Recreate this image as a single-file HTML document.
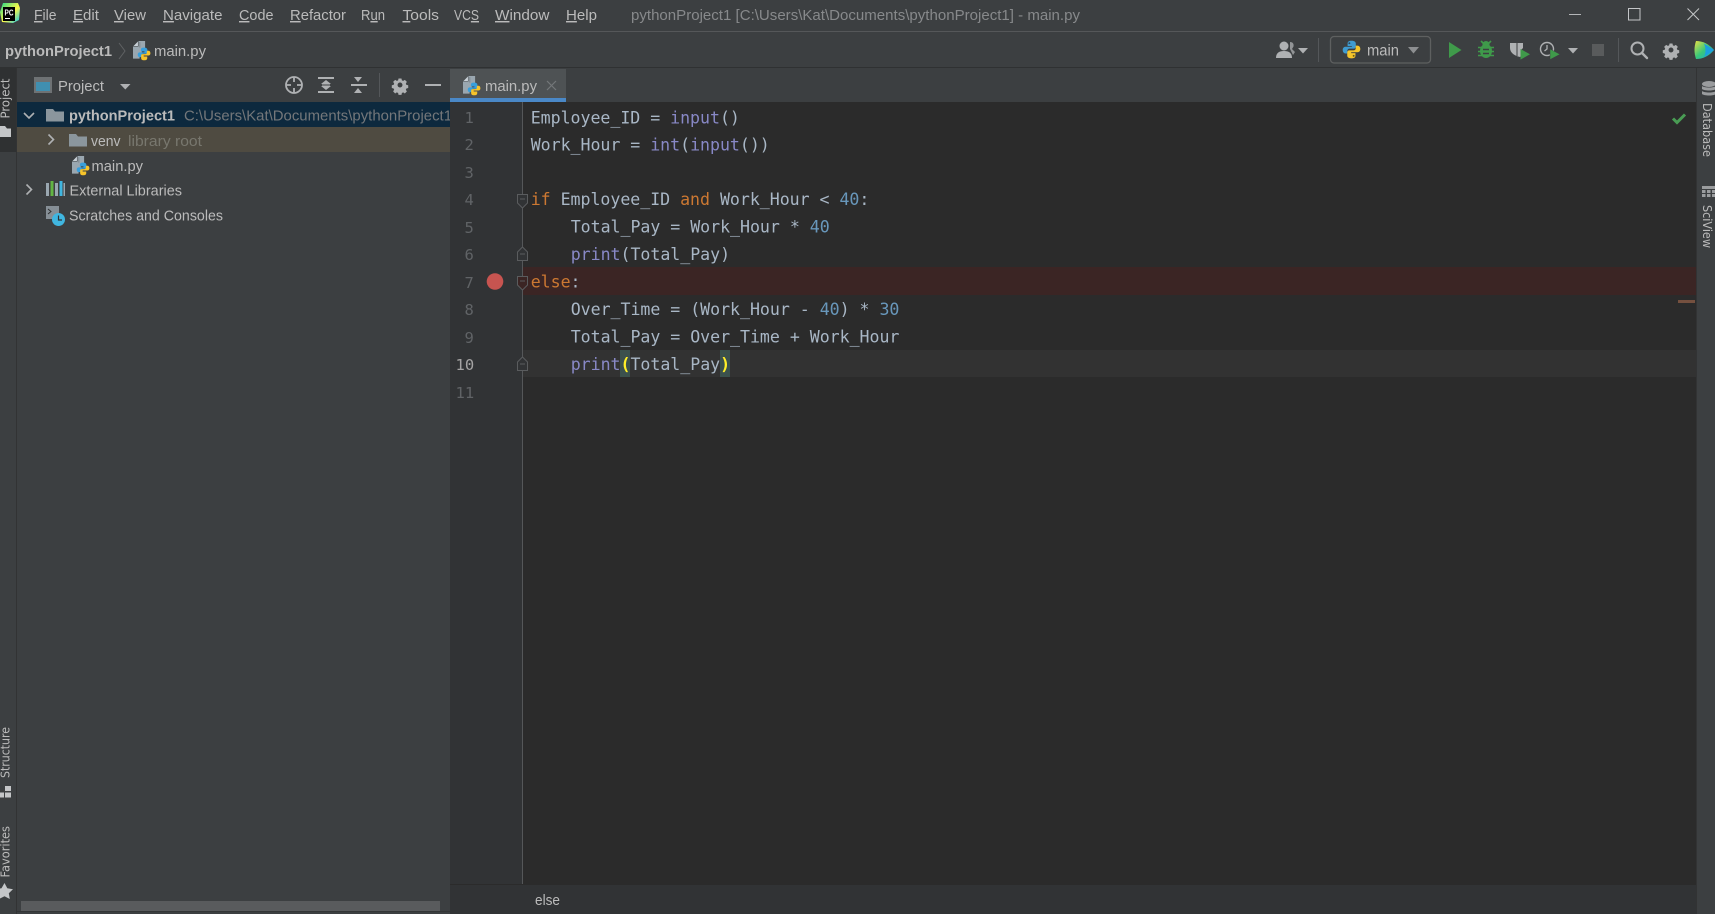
<!DOCTYPE html>
<html lang="en">
<head>
<meta charset="utf-8">
<title>pythonProject1 - main.py</title>
<style>
html,body{margin:0;padding:0;width:1715px;height:914px;overflow:hidden;background:#3c3f41}
svg{display:block;position:absolute;left:0;top:0}
text{font-family:"Liberation Sans",sans-serif;font-size:14.5px;fill:#bbbbbb;white-space:pre}
.c text,text.c{font-family:"DejaVu Sans Mono","Liberation Mono",monospace;font-size:16.6px;letter-spacing:-.03px;fill:#a9b7c6}
.k{fill:#cc7832}.b{fill:#8888c6}.n{fill:#6897bb}.y{fill:#ffef28;font-weight:bold}
.ln{font-family:"DejaVu Sans Mono","Liberation Mono",monospace;font-size:15.5px;fill:#606366}
.v{font-family:"DejaVu Sans","Liberation Sans",sans-serif;font-size:12.5px;fill:#bbbbbb}
.u{text-decoration:underline}
</style>
</head>
<body>
<svg width="1715" height="914" viewBox="0 0 1715 914" xmlns="http://www.w3.org/2000/svg">
<defs>
<g id="py">
<path fill="#3f9bd0" d="M8 .6C5.3.6 4.7 1.7 4.7 3v2h3.6v.7H3C1.6 5.7.6 6.8.6 8.4c0 1.7 1 2.9 2.4 2.9h1.500V9c0-1 .8-1.700 1.800-1.700h3.600c1 0 1.700-.8 1.700-1.700V3C11.600 1.700 10.600 .6 8 .6z"/>
<path fill="#f5c52b" d="M8 15.400c2.700 0 3.300-1.100 3.300-2.400v-2H7.700v-.7H13c1.400 0 2.400-1.100 2.400-2.700 0-1.700-1-2.900-2.400-2.900h-1.500V7c0 1-.8 1.700-1.800 1.700H6.100c-1 0-1.700.8-1.700 1.700V13c0 1.300 1 2.400 3.600 2.400z"/>
<circle cx="6.200" cy="2.700" r=".8" fill="#2b4a60"/><circle cx="9.800" cy="13.300" r=".8" fill="#6b5a14"/>
</g>
<g id="pyfat">
<path fill="#389fdc" d="M8 0C4.500 0 4 1.200 4 3v1.800h4.500V6H2.500C1 6 0 7 0 8.800 0 10.800 1 12 2.500 12H5V9.500C5 8.300 5.700 7.800 7 7.800h3.500c1 0 1.700-.7 1.700-1.700V3C12.200 1.200 11 0 8 0z"/>
<path fill="#f7c42a" d="M8 16c3.500 0 4-1.200 4-3v-1.800H7.500V10h6c1.500 0 2.500-1 2.500-2.800C16 5.200 15 4 13.500 4H11.500v2.500c0 1.200-.7 1.700-2 1.700H6c-1 0-1.700.7-1.700 1.700V13C4.300 14.800 5 16 8 16z"/>
</g>
<g id="file">
<path fill="#9aa7b0" d="M5 0h6v8H8v4H6v4H0V5h5z"/>
<path fill="#c8d0d6" d="M4.500 .5v4h-4z"/>
<path fill="#3c3f41" d="M5.800 1h.8v5h-.8z" opacity=".35"/>
<g transform="translate(4.300 6) scale(.72)"><use href="#pyfat"/></g>
</g>
<g id="folder"><path fill="#8b969d" d="M0 0h7l2 2.500h9V12.500H0z"/></g>
<path id="gear" fill="#afb1b3" fill-rule="evenodd" transform="scale(.82)" d="M-1.800-8h3.600l.5 2.300 1.600.7 2-1.300 2.500 2.500-1.300 2 .7 1.600 2.200.5v3.400l-2.200.5-.7 1.600 1.300 2-2.500 2.500-2-1.300-1.600.7-.5 2.300h-3.600l-.5-2.300-1.600-.7-2 1.300-2.500-2.500 1.300-2-.7-1.600-2.200-.5v-3.400l2.200-.5.7-1.600-1.300-2 2.500-2.500 2 1.300 1.600-.7zM0-3a3 3 0 1 0 0 6 3 3 0 0 0 0-6z"/>
<linearGradient id="tb" x1="0" y1="0" x2="1" y2="1"><stop offset="0" stop-color="#e8df45"/><stop offset=".5" stop-color="#39c87a"/><stop offset="1" stop-color="#17a5e0"/></linearGradient>
<linearGradient id="pc" x1="0" y1="0" x2="1" y2="1"><stop offset="0" stop-color="#21d789"/><stop offset=".55" stop-color="#fcf84a"/><stop offset="1" stop-color="#07c3f2"/></linearGradient>
<clipPath id="tree"><rect x="17" y="102" width="433" height="800"/></clipPath>
</defs>

<!-- base -->
<rect width="1715" height="914" fill="#3c3f41"/>
<rect y="31" width="1715" height="1" fill="#555759"/>
<rect y="67" width="1715" height="1" fill="#2f3132"/>

<!-- logo -->
<path d="M3 3h15l2 5-1 12-6 3-11-1-2-10z" fill="url(#pc)"/>
<rect x="3" y="7" width="12" height="14" fill="#000"/>
<text x="4.500" y="15.500" style="font-size:8px;font-weight:bold;fill:#fff" textLength="9" lengthAdjust="spacingAndGlyphs">PC</text>
<rect x="5" y="18" width="5" height="1" fill="#fff"/>

<!-- menu -->
<text x="34" y="20" textLength="22.500" lengthAdjust="spacingAndGlyphs"><tspan class="u">F</tspan>ile</text>
<text x="73" y="20" textLength="26" lengthAdjust="spacingAndGlyphs"><tspan class="u">E</tspan>dit</text>
<text x="114" y="20" textLength="32" lengthAdjust="spacingAndGlyphs"><tspan class="u">V</tspan>iew</text>
<text x="163" y="20" textLength="59.500" lengthAdjust="spacingAndGlyphs"><tspan class="u">N</tspan>avigate</text>
<text x="239" y="20" textLength="34.500" lengthAdjust="spacingAndGlyphs"><tspan class="u">C</tspan>ode</text>
<text x="290" y="20" textLength="56" lengthAdjust="spacingAndGlyphs"><tspan class="u">R</tspan>efactor</text>
<text x="361" y="20" textLength="24" lengthAdjust="spacingAndGlyphs">R<tspan class="u">u</tspan>n</text>
<text x="402.500" y="20" textLength="36.500" lengthAdjust="spacingAndGlyphs"><tspan class="u">T</tspan>ools</text>
<text x="454" y="20" textLength="25" lengthAdjust="spacingAndGlyphs">VC<tspan class="u">S</tspan></text>
<text x="495" y="20" textLength="54.500" lengthAdjust="spacingAndGlyphs"><tspan class="u">W</tspan>indow</text>
<text x="566" y="20" textLength="31" lengthAdjust="spacingAndGlyphs"><tspan class="u">H</tspan>elp</text>
<text x="631" y="20" textLength="449" lengthAdjust="spacingAndGlyphs" style="fill:#87898b">pythonProject1 [C:\Users\Kat\Documents\pythonProject1] - main.py</text>

<!-- window controls -->
<rect x="1569" y="14" width="12" height="1" fill="#b4b6b8"/>
<rect x="1628.500" y="8.500" width="11.500" height="11.500" fill="none" stroke="#c4c6c8" stroke-width="1"/>
<path d="M1687.500 8.500l11.500 11.500M1699 8.500l-11.500 11.500" stroke="#c4c6c8" stroke-width="1" fill="none"/>

<!-- nav bar -->
<text x="5" y="56" textLength="107" lengthAdjust="spacingAndGlyphs" style="font-weight:bold">pythonProject1</text>
<path d="M119 43l6 8-6 8" fill="none" stroke="#606264" stroke-width="1"/>
<use href="#file" transform="translate(133 41) scale(1.100)"/>
<text x="154" y="56" textLength="52" lengthAdjust="spacingAndGlyphs">main.py</text>

<!-- toolbar right -->
<g fill="#afb1b3">
<circle cx="1284" cy="46" r="4.500"/><path d="M1276 58c0-5 3-7 8-7s8 2 8 7z"/>
<path d="M1290 42c3 0 4 2 3.500 4.500l-1.500 2.500 3 3-2 3-2-4-1-2z" opacity=".75"/>
<path d="M1298 48h10l-5 5.500z"/>
</g>
<rect x="1318" y="38" width="1" height="24" fill="#54575a"/>
<rect x="1330.500" y="36.500" width="100" height="26.500" rx="3.500" fill="none" stroke="#5e6060" stroke-width="1.300"/>
<use href="#py" transform="translate(1342 40) scale(1.190)"/>
<text x="1367" y="55.500" textLength="32" lengthAdjust="spacingAndGlyphs" style="font-size:15.500px">main</text>
<path d="M1408 47h11l-5.500 6.500z" fill="#8d8f91"/>

<path d="M1449 42l12.500 8-12.500 8z" fill="#3f9a4a"/>
<g fill="#3f9a4a">
<ellipse cx="1486" cy="51" rx="6" ry="7"/><circle cx="1486" cy="44.500" r="3.500"/>
<path d="M1481 41l2.500 2.500M1491 41l-2.500 2.500M1478 47.500h16M1478 51.500h16M1478 55.500h16" stroke="#3f9a4a" stroke-width="1.600" fill="none"/>
</g>
<path d="M1483 49.500h6M1483 53.500h6" stroke="#3c3f41" stroke-width="1.500"/>
<path d="M1510 43h13v5l-2 2v6l-1 1c-5-1-10-4-10-9z" fill="#afb1b3"/>
<path d="M1516.500 43h1v13h-1z" fill="#3c3f41"/>
<path d="M1520.500 49l9.500 5.300-9.500 5.300z" fill="#3f9a4a"/>
<circle cx="1547" cy="49" r="6.500" fill="none" stroke="#afb1b3" stroke-width="1.400"/>
<path d="M1547 45v4l-2.500 2" fill="none" stroke="#afb1b3" stroke-width="1.300"/>
<path d="M1550 49l10 5.300-10 5.300z" fill="#3f9a4a" stroke="#3c3f41" stroke-width=".5"/>
<path d="M1568 48h10l-5 5.500z" fill="#afb1b3"/>
<rect x="1592" y="44" width="12" height="12" fill="#595b5c"/>
<rect x="1618" y="38" width="1" height="24" fill="#54575a"/>
<circle cx="1637.500" cy="48.500" r="6" fill="none" stroke="#afb1b3" stroke-width="2"/>
<path d="M1642 53l5 5" stroke="#afb1b3" stroke-width="2.400" stroke-linecap="round"/>
<use href="#gear" transform="translate(1671 50)"/>
<path d="M1696 41c7 0 13 3 18 9-5 6-11 9-18 9-2-6-2-12 0-18z" fill="url(#tb)"/>
<path d="M1704 43.500l10 6.500-10 7c2-4 2-9 0-13.500z" fill="#1b9fe0"/>

<!-- left stripe -->
<rect x="0" y="68" width="16" height="846" fill="#3c3f41"/>
<rect x="0" y="68" width="16" height="84" fill="#2f3132"/>
<rect x="16" y="68" width="1" height="846" fill="#323334"/>
<text class="v" transform="translate(9.500 118.500) rotate(-90)" textLength="40" lengthAdjust="spacingAndGlyphs">Project</text>
<path d="M0 126h5l2 2.500h4V137H0z" fill="#c4c6c8"/>
<text class="v" transform="translate(9.500 778) rotate(-90)" textLength="51" lengthAdjust="spacingAndGlyphs">Structure</text>
<path d="M5 786h6v5H5zM0 792.500h4v5H0zM5 792.500h6v5H5z" fill="#c4c6c8"/>
<text class="v" transform="translate(9.500 877.500) rotate(-90)" textLength="51.500" lengthAdjust="spacingAndGlyphs">Favorites</text>
<path d="M4.500 883l2.800 5.300 5.700.9-4.200 4 1 5.800-5.300-2.700L-1 899l1-5.800-4.200-4 5.700-.9z" fill="#c4c6c8"/>

<!-- project toolbar -->
<rect x="34" y="77" width="18" height="16" fill="#6e7274"/>
<rect x="36" y="82" width="14" height="9" fill="#408fb0"/>
<text x="58" y="91" textLength="46" lengthAdjust="spacingAndGlyphs">Project</text>
<path d="M120 84h10.500l-5.200 5.500z" fill="#afb1b3"/>
<g fill="none" stroke="#afb1b3" stroke-width="1.800">
<circle cx="294" cy="85" r="8"/>
<path d="M294 77v5M294 88v5M286 85h5M297 85h5"/>
</g>
<g fill="#afb1b3">
<rect x="318" y="77" width="16" height="2"/><rect x="318" y="91" width="16" height="2"/><rect x="322" y="84.500" width="8" height="1"/>
<path d="M326 80l5 4h-10zM326 90l5-4h-10z"/>
<rect x="351" y="84" width="16" height="2"/>
<path d="M354 77h8l-4 5zM354 93h8l-4-5z"/>
</g>
<rect x="379" y="73" width="1" height="24" fill="#54575a"/>
<use href="#gear" transform="translate(400 85)"/>
<rect x="425" y="84" width="16" height="2" fill="#afb1b3"/>

<!-- tree -->
<rect x="17" y="102" width="433" height="25" fill="#0d293e"/>
<rect x="17" y="127" width="433" height="25" fill="#4f4b41"/>
<path d="M24 113l5 5 5-5" fill="none" stroke="#afb1b3" stroke-width="1.600"/>
<use href="#folder" transform="translate(46 109)"/>
<g clip-path="url(#tree)">
<text x="69" y="120.500" textLength="106" lengthAdjust="spacingAndGlyphs" style="font-weight:bold">pythonProject1</text>
<text x="184" y="120.500" textLength="268" lengthAdjust="spacingAndGlyphs" style="fill:#74777a">C:\Users\Kat\Documents\pythonProject1</text>
</g>
<path d="M48.500 134.500l5 5-5 5" fill="none" stroke="#afb1b3" stroke-width="1.600"/>
<use href="#folder" transform="translate(69 134)"/>
<text x="91" y="146" textLength="29.500" lengthAdjust="spacingAndGlyphs">venv</text>
<text x="128" y="146" textLength="74" lengthAdjust="spacingAndGlyphs" style="fill:#78776e">library root</text>
<use href="#file" transform="translate(72 156) scale(1.100)"/>
<text x="91.500" y="171" textLength="51.500" lengthAdjust="spacingAndGlyphs">main.py</text>
<path d="M26.500 184.500l5 5-5 5" fill="none" stroke="#afb1b3" stroke-width="1.600"/>
<rect x="46" y="183" width="3" height="13" fill="#9aa7b0"/><rect x="50.500" y="181" width="3" height="15" fill="#62b543"/><rect x="55" y="183" width="3" height="13" fill="#9aa7b0"/><rect x="59.500" y="181" width="3" height="15" fill="#40b6e0"/><rect x="63.500" y="183" width="1.500" height="13" fill="#9aa7b0"/>
<text x="69.500" y="195.500" textLength="112.500" lengthAdjust="spacingAndGlyphs">External Libraries</text>
<rect x="46" y="206" width="13" height="13" fill="#868f96"/>
<path d="M48 209l3 2.500-3 2.500" fill="none" stroke="#2f3132" stroke-width="1"/>
<circle cx="58.500" cy="219.500" r="6.500" fill="#40b6e0"/>
<path d="M58.500 215.500v4.500h3.500" fill="none" stroke="#2f3132" stroke-width="1.200"/>
<text x="69" y="220.500" textLength="154" lengthAdjust="spacingAndGlyphs">Scratches and Consoles</text>
<rect x="21" y="901" width="419" height="10" fill="#595b5d"/>
<rect x="17" y="911" width="433" height="1" fill="#333536"/>

<!-- tab bar -->
<rect x="450" y="68" width="1246" height="34" fill="#3c3f41"/>
<rect x="450" y="69" width="116" height="29" fill="#4e5254"/>
<rect x="450" y="98" width="116" height="4" fill="#4a88c7"/>
<use href="#file" transform="translate(463 76) scale(1.100)"/>
<text x="485" y="91" textLength="52" lengthAdjust="spacingAndGlyphs">main.py</text>
<path d="M547 81l9 9M556 81l-9 9" stroke="#74777a" stroke-width="1.200"/>

<!-- editor -->
<rect x="450" y="102" width="73" height="782" fill="#313335"/>
<rect x="523" y="102" width="1173" height="782" fill="#2b2b2b"/>
<rect x="523" y="267" width="1173" height="28" fill="#3b2524"/>
<rect x="523" y="350" width="1173" height="27" fill="#323232"/>
<rect x="522" y="102" width="1" height="782" fill="#555759"/>
<rect x="620" y="350" width="10" height="27" fill="#3b514d"/>
<rect x="720" y="350" width="10" height="27" fill="#3b514d"/>
<rect x="450" y="884" width="1246" height="30" fill="#313335"/>
<rect x="450" y="884" width="1246" height="1" fill="#2b2b2b"/>
<text x="535" y="905" textLength="25" lengthAdjust="spacingAndGlyphs">else</text>

<!-- gutter numbers -->
<text class="ln" x="464.500" y="123">1</text>
<text class="ln" x="464.500" y="150">2</text>
<text class="ln" x="464.500" y="178">3</text>
<text class="ln" x="464.500" y="205">4</text>
<text class="ln" x="464.500" y="233">5</text>
<text class="ln" x="464.500" y="260">6</text>
<text class="ln" x="464.500" y="288">7</text>
<text class="ln" x="464.500" y="315">8</text>
<text class="ln" x="464.500" y="343">9</text>
<text class="ln" x="455.500" y="370" style="fill:#a4a3a3">10</text>
<text class="ln" x="455.500" y="398">11</text>

<circle cx="495" cy="281.500" r="8.300" fill="#c75450"/>

<!-- fold markers -->
<g fill="#313335" stroke="#5a5c5e" stroke-width="1">
<path d="M517.500 194.500h10v8.500l-5 5-5-5z"/><path d="M520 199h5"/>
<path d="M517.500 276.500h10v8.500l-5 5-5-5z" fill="#3b2524"/><path d="M520 281h5"/>
<path d="M517.500 260.500h10v-8.500l-5-5-5 5z"/><path d="M520 254h5"/>
<path d="M517.500 370.500h10v-8.500l-5-5-5 5z"/><path d="M520 364h5"/>
</g>

<!-- code -->
<g class="c">
<text x="530.700" y="123.300">Employee_ID = <tspan class="b">input</tspan>()</text>
<text x="530.700" y="150.500">Work_Hour = <tspan class="b">int</tspan>(<tspan class="b">input</tspan>())</text>
<text x="530.700" y="205"><tspan class="k">if</tspan> Employee_ID <tspan class="k">and</tspan> Work_Hour &lt; <tspan class="n">40</tspan>:</text>
<text x="570.700" y="232.700">Total_Pay = Work_Hour * <tspan class="n">40</tspan></text>
<text x="570.700" y="260"><tspan class="b">print</tspan>(Total_Pay)</text>
<text x="530.700" y="287.700"><tspan class="k">else</tspan>:</text>
<text x="570.700" y="315">Over_Time = (Work_Hour - <tspan class="n">40</tspan>) * <tspan class="n">30</tspan></text>
<text x="570.700" y="342.700">Total_Pay = Over_Time + Work_Hour</text>
<text x="570.700" y="370"><tspan class="b">print</tspan><tspan class="y">(</tspan>Total_Pay<tspan class="y">)</tspan></text>
</g>

<path d="M1673 118.500l4 4 8-8" fill="none" stroke="#499c54" stroke-width="3"/>
<rect x="1678" y="300" width="17" height="3" fill="#75503f"/>

<!-- right stripe -->
<rect x="1696" y="68" width="19" height="846" fill="#3c3f41"/>
<rect x="1696" y="68" width="1" height="846" fill="#323334"/>
<g fill="#9a9c9e">
<ellipse cx="1709" cy="84" rx="7" ry="3"/><path d="M1702 86c2 2 12 2 14 0v3c-2 2-12 2-14 0zM1702 91c2 2 12 2 14 0v3c-2 2-12 2-14 0z"/>
<path d="M1702 186h13v3h-13zM1702 190h3.500v3h-3.500zM1707 190h3.500v3h-3.500zM1712 190h3v3h-3zM1702 194h3.500v3h-3.500zM1707 194h3.500v3h-3.500zM1712 194h3v3h-3z"/>
</g>
<text class="v" transform="translate(1703 103) rotate(90)" textLength="54" lengthAdjust="spacingAndGlyphs">Database</text>
<text class="v" transform="translate(1703 205) rotate(90)" textLength="43" lengthAdjust="spacingAndGlyphs">SciView</text>
</svg>
</body>
</html>
